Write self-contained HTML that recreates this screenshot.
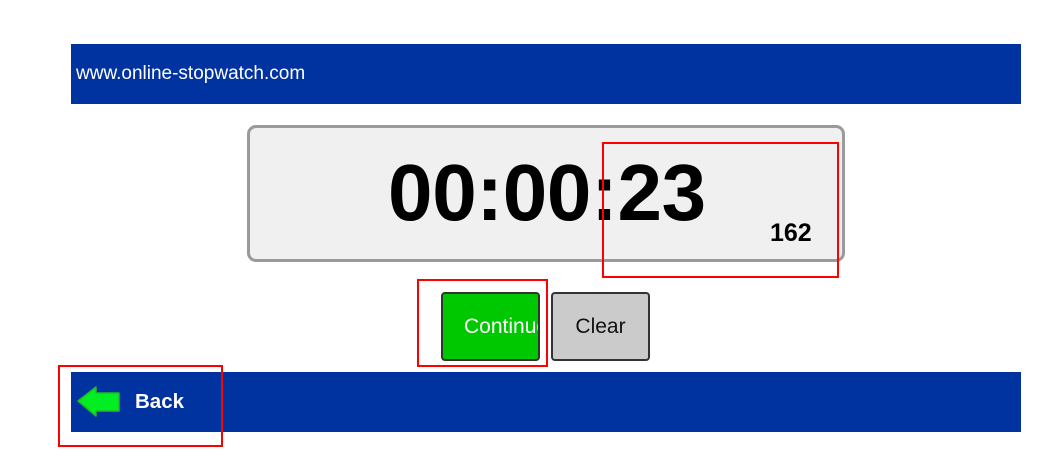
<!DOCTYPE html>
<html><head><style>
html,body{margin:0;padding:0;background:#fff;width:1063px;height:466px;overflow:hidden;font-family:"Liberation Sans",Arial,sans-serif;position:relative}
.abs{position:absolute}
.bar{background:#0033a0;left:71px;width:950px;height:60px}
.box{left:247px;top:125px;width:592px;height:131px;border:3px solid #9a9a9a;border-radius:9px;background:#f0f0f0}
.red{border:2px solid #f00;box-sizing:border-box}
.btn{top:292px;height:69px;width:99px;box-sizing:border-box;border:2px solid #333;border-radius:4px;font-size:20px;overflow:hidden;white-space:nowrap;line-height:65px}
</style></head><body>
<div class="abs bar" style="top:44px"></div>
<div class="abs" style="left:76px;top:63px;color:#fff;font-size:19px">www.online-stopwatch.com</div>
<div class="abs box"></div>
<div class="abs" style="left:388px;top:150px;font-size:80px;font-weight:bold;line-height:86px;letter-spacing:-0.3px">00:00:23</div>
<div class="abs" style="left:770px;top:218px;font-size:25px;font-weight:bold;line-height:30px">162</div>
<div class="abs btn" style="left:441px;background:#00c800;color:#fff;padding-left:21px;font-size:21px">Continue</div>
<div class="abs btn" style="left:551px;background:#cbcbcb;color:#111;text-align:center;font-size:21px">Clear</div>
<div class="abs bar" style="top:372px"></div>
<svg class="abs" style="left:76px;top:385px" width="46" height="33" viewBox="0 0 46 33"><path d="M2 16 L20 2 L20 8 L43 8 L43 26 L20 26 L20 31 Z" fill="#00ee22" stroke="#22bb22" stroke-width="1.5" stroke-linejoin="round"/></svg>
<div class="abs" style="left:135px;top:390px;color:#fff;font-size:20.5px;font-weight:bold">Back</div>
<div class="abs red" style="left:602px;top:142px;width:237px;height:136px"></div>
<div class="abs red" style="left:417px;top:279px;width:131px;height:88px"></div>
<div class="abs red" style="left:58px;top:365px;width:165px;height:82px"></div>
</body></html>
